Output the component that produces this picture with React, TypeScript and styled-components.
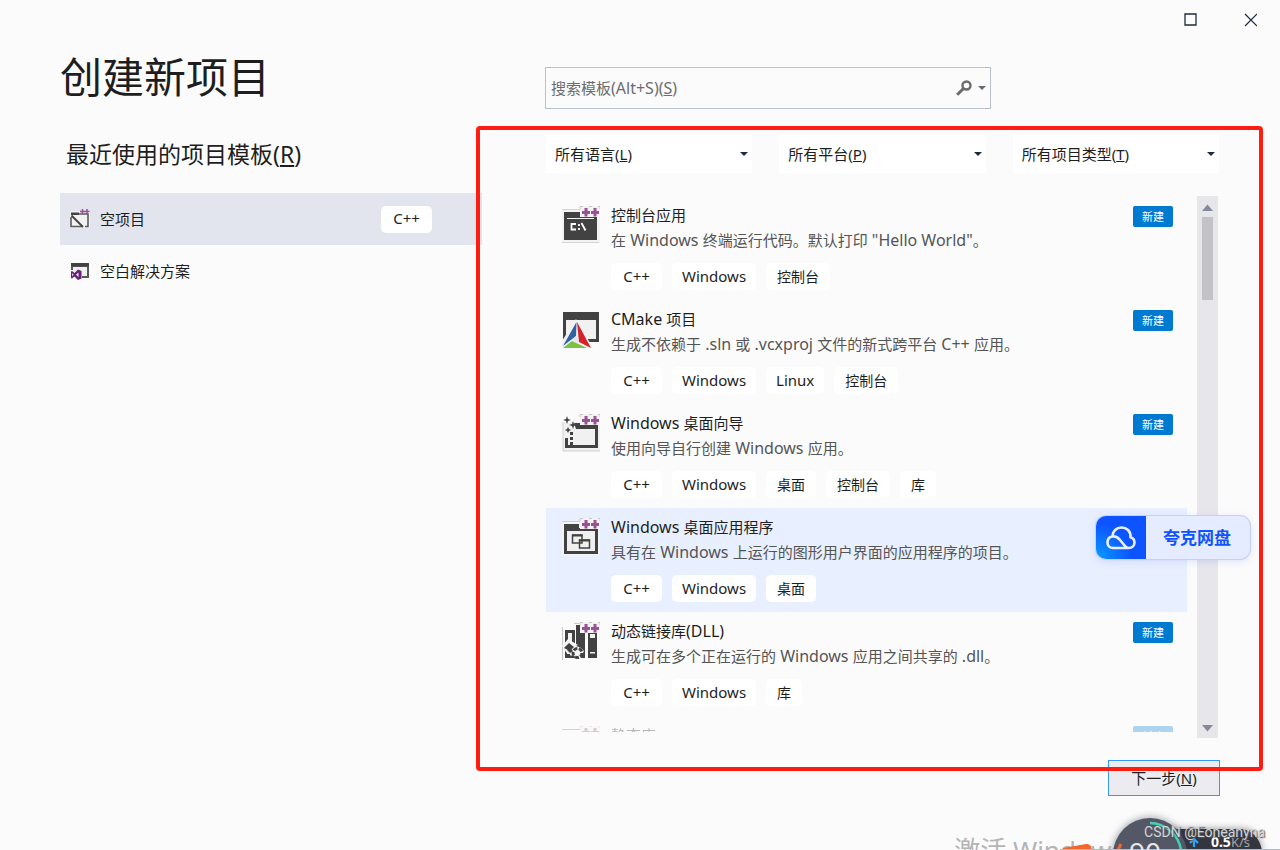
import React from "react";
import styled, { createGlobalStyle } from "styled-components";

const GlobalStyle = createGlobalStyle`
  *, *::before, *::after { box-sizing: border-box; }
  body {
    margin: 0;
    background: #fbfbfc;
    color: #1e1e1e;
    font-family: "Noto Sans", "Noto Sans CJK SC", sans-serif;
    font-size: 15px;
  }
  h1, h2, h3, p, ul { margin: 0; padding: 0; font-weight: 400; }
  ul { list-style: none; }
  button, input, select { font: inherit; color: inherit; }
`;

const Window = styled.div`
  position: relative;
  min-height: 100vh;
  overflow: hidden;
  background: #fbfbfc;
`;

const TitleBar = styled.header`
  display: flex;
  justify-content: flex-end;
  height: 40px;
`;

const WindowButton = styled.button`
  display: flex;
  align-items: center;
  justify-content: center;
  width: 60px;
  padding: 0;
  border: 0;
  background: transparent;
`;

const Content = styled.main`
  display: grid;
  grid-template-columns: minmax(0, 422fr) minmax(0, 675fr);
  column-gap: 63px;
  padding: 0 60px 54px;
`;

const RecentPane = styled.section`
  padding-top: 9px;
`;

const PageTitle = styled.h1`
  font-size: 42px;
  line-height: 56px;
`;

const SectionTitle = styled.h2`
  margin: 33px 0 23px;
  padding-left: 6px;
  font-size: 23px;
  line-height: 32px;
`;

const RecentRow = styled.li<{ $active?: boolean }>`
  display: flex;
  align-items: center;
  gap: 10px;
  height: 52px;
  padding: 0 50px 0 10px;
  background: ${(p) => (p.$active ? "#e2e5ee" : "transparent")};
`;

const RecentName = styled.span`
  flex: 1;
  padding-bottom: 2px;
`;

const Tag = styled.span<{ $latin?: boolean }>`
  display: inline-flex;
  align-items: center;
  justify-content: center;
  min-width: ${(p) => (p.$latin ? "51px" : "36px")};
  height: 27px;
  padding: ${(p) => (p.$latin ? "0 10px 2px" : "0 11px 2px")};
  border-radius: 5px;
  background: #ffffff;
  font-size: ${(p) => (p.$latin ? "15px" : "14px")};
`;

const Latin = styled.span`
  font-size: 16px;
  line-height: 1;
`;

const TemplatePane = styled.section`
  display: flex;
  flex-direction: column;
  padding-top: 27px;
`;

const SearchBox = styled.div`
  position: relative;
  display: flex;
  align-items: center;
  width: 66%;
  height: 42px;
  padding-right: 4px;
  border: 1px solid #b9c0d0;
`;

const SearchInput = styled.input`
  flex: 1;
  min-width: 0;
  height: 100%;
  padding: 0 5px;
  border: 0;
  outline: 0;
  background: transparent;
  &:not(:placeholder-shown) + label { display: none; }
`;

const SearchLabel = styled.label`
  position: absolute;
  left: 5px;
  padding-bottom: 2px;
  color: #6d6d6d;
  pointer-events: none;
`;

const SearchButton = styled.button`
  display: flex;
  align-items: center;
  gap: 6px;
  padding: 0;
  border: 0;
  background: transparent;
`;

const TemplateBrowser = styled.div`
  position: relative;
  margin-top: 26px;
`;

const Filters = styled.div`
  display: grid;
  grid-template-columns: repeat(3, minmax(0, 1fr));
  gap: 27px;
  padding: 0 1px;
`;

const FilterBox = styled.label`
  position: relative;
  display: flex;
  align-items: center;
  justify-content: space-between;
  height: 38px;
  padding: 0 4px 0 9px;
  background: #ffffff;
`;

const FilterText = styled.span`
  padding-bottom: 2px;
`;

const FilterSelect = styled.select`
  position: absolute;
  inset: 0;
  width: 100%;
  border: 0;
  opacity: 0;
`;

const ListArea = styled.div`
  display: flex;
  gap: 10px;
  height: 542px;
  margin-top: 23px;
  padding: 0 2px 0 1px;
`;

const TemplateList = styled.ul`
  flex: 1;
  min-width: 0;
  height: 536px;
  overflow: hidden;
`;

const TemplateItem = styled.li<{ $active?: boolean; $faded?: boolean }>`
  display: flex;
  gap: 11px;
  height: 104px;
  padding: 7px 14px 10px 16px;
  background: ${(p) => (p.$active ? "#e8effe" : "transparent")};
  opacity: ${(p) => (p.$faded ? 0.3 : 1)};
`;

const IconSlot = styled.div`
  width: 38px;
  padding-top: 3px;
`;

const TemplateText = styled.div`
  flex: 1;
  min-width: 0;
`;

const TemplateName = styled.h3`
  height: 25px;
  font-size: 15px;
  line-height: 25px;
  white-space: nowrap;
`;

const Description = styled.p`
  height: 25px;
  color: #555555;
  line-height: 25px;
  white-space: nowrap;
`;

const Tags = styled.div`
  display: flex;
  gap: 10px;
  margin-top: 10px;
`;

const NewBadge = styled.span`
  width: 40px;
  height: 21px;
  margin-top: 3px;
  border-radius: 2px;
  background: #0079d0;
  color: #ffffff;
  font-size: 11px;
  line-height: 22px;
  text-align: center;
`;

const ScrollTrack = styled.div`
  display: flex;
  flex-direction: column;
  align-items: center;
  width: 21px;
  padding: 8px 0 6px;
  background: #e7e6eb;
`;

const ScrollThumb = styled.div`
  width: 11px;
  height: 83px;
  margin: 6px 0 auto;
  background: #c2c2c7;
`;

const Highlight = styled.div`
  position: absolute;
  z-index: 2;
  inset: -9px -43px -33px -69px;
  border: 4px solid #ff1d11;
  border-radius: 4px;
  pointer-events: none;
`;

const DriveButton = styled.button`
  position: absolute;
  top: 381px;
  right: -30px;
  display: flex;
  width: 154px;
  height: 43px;
  padding: 0;
  overflow: hidden;
  border: 0;
  border-radius: 10px;
  background: #e6ecff;
  box-shadow: 0 0 0 1px #c3d1f8, 0 2px 8px rgba(60, 100, 230, 0.18);
`;

const DriveLogo = styled.span`
  display: flex;
  align-items: center;
  justify-content: center;
  width: 50px;
  height: 100%;
  background: radial-gradient(circle at 0 100%, #0a9cff 0, #0d53ff 55%);
`;

const DriveName = styled.span`
  flex: 1;
  padding-right: 2px;
  color: #0d53ff;
  font-size: 17px;
  font-weight: 700;
  line-height: 43px;
  text-align: center;
`;

const NextButton = styled.button`
  align-self: flex-end;
  width: 112px;
  height: 36px;
  margin-top: 22px;
  padding: 0 0 2px;
  border: 1px solid #3399ff;
  background: #ececf0;
`;

const Watermark = styled.div`
  position: absolute;
  right: 156px;
  bottom: -16px;
  color: #b4b4b4;
  font-size: 26px;
  line-height: 32px;
  white-space: nowrap;
`;

const Monitor = styled.div`
  position: absolute;
  right: 0;
  bottom: 0;
  width: 220px;
  height: 48px;
`;

const MonitorArt = styled.svg`
  display: block;
`;

const Speed = styled.div`
  position: absolute;
  right: 30px;
  bottom: 0;
  color: #a0a3aa;
  font-size: 13px;
  line-height: 16px;
  b { color: #ffffff; font-size: 14px; }
`;

const Percent = styled.div`
  position: absolute;
  left: 69px;
  bottom: -18px;
  color: #e4e6ec;
  font-size: 28px;
  line-height: 32px;
`;

const Credit = styled.div`
  position: absolute;
  right: 15px;
  bottom: 8px;
  color: #d4d4d6;
  font-family: Roboto, sans-serif;
  font-size: 14px;
  line-height: 20px;
  text-shadow: 1px 1px 1px #55585f;
  white-space: nowrap;
`;

const DARK = "#424242";
const PURPLE = "#9b4f96";

function Caret({ color = "#1b2a41" }: { color?: string }) {
  return (
    <svg width="8" height="4" viewBox="0 0 8 4" aria-hidden="true">
      <path d="M0 0H8L4 4Z" fill={color} />
    </svg>
  );
}

function PlusPlus() {
  return (
    <g>
      <path d="M18 0H38V11H18Z" fill="#f3f3f3" />
      <path d="M18 3V0.500H21M27 0.500H30M36 0.500H38V3" stroke="#c8c8c8" fill="none" />
      <path
        d="M22.5 2H25.5V5H28V8H25.5V10.5H22.5V8H20V5H22.5ZM31.5 2H34.5V5H37V8H34.5V10.5H31.5V8H29V5H31.5Z"
        fill={PURPLE}
      />
    </g>
  );
}

function ConsoleIcon() {
  return (
    <>
      <path d="M0 3H38V37H0Z" fill="#f3f3f3" />
      <path d="M0 3.500H18M0 36.500H37" stroke="#d6d6d6" />
      <path d="M2 6H35V34H2Z" fill={DARK} />
      <path d="M5 12.5H32" stroke="#f1f1f1" />
      <path
        d="M14 18H9.5V23.5H14M17 18V20M17 22V24M19.5 17L23.5 24.5"
        stroke="#fff"
        strokeWidth="1.8"
        fill="none"
      />
      <PlusPlus />
    </>
  );
}

function CMakeIcon() {
  return (
    <>
      <path d="M1 2H37V32H1Z" fill={DARK} />
      <path d="M4 10H34V29H4Z" fill="#f1f1f1" />
      <path d="M14 9L31 38H0V31Z" fill="#f1f1f1" />
      <path d="M14.500 12L1 36L14 26Z" fill="#2f62a3" />
      <path d="M15 12L29 38L17 32Z" fill="#d3222a" />
      <path d="M1 38L10 31L25 38Z" fill="#7cc242" />
      <path d="M14 26L17 33L10 30Z" fill="#e4e6ea" />
    </>
  );
}

function WizardIcon() {
  return (
    <>
      <path d="M1 8H38V37H1Z" fill="#f1f1f1" />
      <path d="M1 8V37H38" stroke="#cfcfcf" fill="none" />
      <path d="M12 9H19V11H36V34H3V24H6V31H33V15H14Z" fill={DARK} />
      <path
        d="M5 2L6 5L9 6L6 7L5 10L4 7L1 6L4 5ZM11 7L12 10L15 11L12 12L11 15L10 12L7 11L10 10ZM6 13L7 15L9 16L7 17L6 19L5 17L3 16L5 15Z"
        fill={DARK}
      />
      <path d="M9.500 18V31" stroke={DARK} strokeWidth="3" strokeDasharray="3 2" />
      <PlusPlus />
    </>
  );
}

function DesktopIcon() {
  return (
    <>
      <path d="M0 3H38V38H0Z" fill="#f4f4f4" />
      <path d="M0 3.500H18" stroke="#d0d0d0" />
      <path d="M2 6H17V10H36V36H2Z" fill={DARK} />
      <path d="M5 13H33V33H5Z" fill="#f0f0f0" />
      <path d="M10.500 17H20V25H10.500ZM17.500 22H27.500V30H17.500Z" fill="#f0f0f0" stroke={DARK} strokeWidth="1.500" />
      <path d="M10 17.500H20.500M17 22.500H28" stroke={DARK} strokeWidth="2" />
      <PlusPlus />
    </>
  );
}

function LibraryIcon() {
  return (
    <>
      <path d="M0.500 5V38M12 1.500H17" stroke="#c8c8c8" />
      <path d="M3 8H13V36H3Z" fill={DARK} />
      <path d="M6 11H10V20H6Z" fill="#f1f1f1" />
      <path d="M14 3H18V11H23V36H14Z" fill={DARK} />
      <path d="M26 11H35V36H26Z" fill={DARK} />
      <path d="M28 12H33V16H28ZM28 30H33V31.500H28Z" fill="#f1f1f1" />
      <path d="M0 24L6 17L16 23L22 29L18 37L12 34L6 33Z" fill="#f6f6f6" />
      <path d="M2 26L7 21L12 25L8 29Z" fill={DARK} />
      <path d="M5 28L8 26L11 29L8 31Z" fill={DARK} />
      <circle cx="15.500" cy="31" r="4.500" fill="none" stroke={DARK} strokeWidth="3" strokeDasharray="4 1.500" />
      <path d="M4 32H8V36H4ZM14 24L18 22L20 26Z" fill={DARK} />
      <PlusPlus />
    </>
  );
}

function StaticIcon() {
  return (
    <>
      <path d="M0 3.500H18" stroke="#777" />
      <path d="M3 8H35V36H3Z" fill={DARK} />
      <PlusPlus />
    </>
  );
}

interface Template {
  name: string;
  description: string;
  tags: string[];
  icon: () => React.JSX.Element;
  isNew?: boolean;
  active?: boolean;
  faded?: boolean;
}

const templates: Template[] = [
  {
    name: "控制台应用",
    description: '在 Windows 终端运行代码。默认打印 "Hello World"。',
    tags: ["C++", "Windows", "控制台"],
    icon: ConsoleIcon,
    isNew: true,
  },
  {
    name: "CMake 项目",
    description: "生成不依赖于 .sln 或 .vcxproj 文件的新式跨平台 C++ 应用。",
    tags: ["C++", "Windows", "Linux", "控制台"],
    icon: CMakeIcon,
    isNew: true,
  },
  {
    name: "Windows 桌面向导",
    description: "使用向导自行创建 Windows 应用。",
    tags: ["C++", "Windows", "桌面", "控制台", "库"],
    icon: WizardIcon,
    isNew: true,
  },
  {
    name: "Windows 桌面应用程序",
    description: "具有在 Windows 上运行的图形用户界面的应用程序的项目。",
    tags: ["C++", "Windows", "桌面"],
    icon: DesktopIcon,
    active: true,
  },
  {
    name: "动态链接库(DLL)",
    description: "生成可在多个正在运行的 Windows 应用之间共享的 .dll。",
    tags: ["C++", "Windows", "库"],
    icon: LibraryIcon,
    isNew: true,
  },
  {
    name: "静态库",
    description: "",
    tags: [],
    icon: StaticIcon,
    isNew: true,
    faded: true,
  },
];

const filters = [
  { text: "所有语言", key: "L" },
  { text: "所有平台", key: "P" },
  { text: "所有项目类型", key: "T" },
];

function TagLabel({ text }: { text: string }) {
  return <Tag $latin={/^[\x20-\x7e]+$/.test(text)}>{text}</Tag>;
}

/* Sets the Latin runs of a mixed line one size up, so they balance the Chinese. */
function MixedText({ text }: { text: string }) {
  return (
    <>
      {text.split(/([\x20-\x7e]+)/).map((run, i) => (i % 2 ? <Latin key={i}>{run}</Latin> : run))}
    </>
  );
}

export default function App() {
  return (
    <Window>
      <GlobalStyle />
      <TitleBar>
        <WindowButton aria-label="最大化">
          <svg width="14" height="14" viewBox="0 0 14 14">
            <path d="M2 1H13V12H2Z" fill="none" stroke="#1b2a41" strokeWidth="1.3" />
          </svg>
        </WindowButton>
        <WindowButton aria-label="关闭">
          <svg width="14" height="14" viewBox="0 0 14 14">
            <path d="M2 1L14 13M14 1L2 13" stroke="#1b2a41" strokeWidth="1.200" />
          </svg>
        </WindowButton>
      </TitleBar>

      <Content>
        <RecentPane>
          <PageTitle>创建新项目</PageTitle>
          <SectionTitle>
            最近使用的项目模板(<u>R</u>)
          </SectionTitle>
          <ul>
            <RecentRow $active>
              <svg width="20" height="20" viewBox="0 0 20 20" aria-hidden="true">
                <path d="M0 2H20V19H0Z" fill="#f2f2f2" />
                <path d="M1 3.500H9V6H1Z" fill={DARK} />
                <path d="M1 8V17.500H12M15 17.500H18V5H9" stroke="#5a5a5a" strokeWidth="1.600" fill="none" />
                <path d="M1.500 6.500L13 18" stroke={DARK} strokeWidth="1.800" />
                <path d="M12.500 0V5M10 2.500H15M17 0V5M14.800 2.500H19.500" stroke={PURPLE} strokeWidth="1.500" />
              </svg>
              <RecentName>空项目</RecentName>
              <TagLabel text="C++" />
            </RecentRow>
            <RecentRow>
              <svg width="20" height="20" viewBox="0 0 20 20" aria-hidden="true">
                <path d="M1 2H19V17H12V15H17V6H3V9H1Z" fill="#5a5a5a" />
                <path d="M1 2H19V5.500H1Z" fill={DARK} />
                <path d="M3 6H17V15H3Z" fill="#f1f1f1" />
                <path
                  d="M8 8.500L11.500 10V17.500L8 19L4.500 15.500L2 17.500L1 17V10.500L2 10L4.500 12ZM8.500 11.500L6 13.800L8.500 16ZM2.200 12.300V15.300L3.700 13.800Z"
                  fill="#68217a"
                  fillRule="evenodd"
                />
              </svg>
              <RecentName>空白解决方案</RecentName>
            </RecentRow>
          </ul>
        </RecentPane>

        <TemplatePane>
          <SearchBox>
            <SearchInput id="template-search" type="text" placeholder=" " />
            <SearchLabel htmlFor="template-search">
              搜索模板
              <Latin>
                (Alt+S)(<u>S</u>)
              </Latin>
            </SearchLabel>
            <SearchButton aria-label="搜索">
              <svg width="16" height="16" viewBox="0 0 16 16">
                <circle cx="10.500" cy="5.500" r="4" fill="none" stroke="#6a6a6a" strokeWidth="2.400" />
                <path d="M7.500 8.500L1.200 14.800" stroke="#6a6a6a" strokeWidth="3" />
              </svg>
              <Caret color="#6a6a6a" />
            </SearchButton>
          </SearchBox>

          <TemplateBrowser>
            <Filters>
              {filters.map((f) => (
                <FilterBox key={f.key}>
                  <FilterText>
                    {f.text}(<u>{f.key}</u>)
                  </FilterText>
                  <Caret />
                  <FilterSelect aria-label={f.text}>
                    <option>{f.text}</option>
                  </FilterSelect>
                </FilterBox>
              ))}
            </Filters>

            <ListArea>
              <TemplateList>
                {templates.map((t) => (
                  <TemplateItem key={t.name} $active={t.active} $faded={t.faded}>
                    <IconSlot>
                      <svg width="38" height="38" viewBox="0 0 38 38" aria-hidden="true">
                        <t.icon />
                      </svg>
                    </IconSlot>
                    <TemplateText>
                      <TemplateName>
                        <MixedText text={t.name} />
                      </TemplateName>
                      <Description>
                        <MixedText text={t.description} />
                      </Description>
                      <Tags>
                        {t.tags.map((tag) => (
                          <TagLabel key={tag} text={tag} />
                        ))}
                      </Tags>
                    </TemplateText>
                    {t.isNew && <NewBadge>新建</NewBadge>}
                  </TemplateItem>
                ))}
              </TemplateList>
              <ScrollTrack>
                <svg width="11" height="7" viewBox="0 0 11 7" aria-hidden="true">
                  <path d="M0 7H11L5.500 0.500Z" fill="#868999" />
                </svg>
                <ScrollThumb />
                <svg width="11" height="7" viewBox="0 0 11 7" aria-hidden="true">
                  <path d="M0 0H11L5.500 6.500Z" fill="#868999" />
                </svg>
              </ScrollTrack>
            </ListArea>

            <DriveButton>
              <DriveLogo>
                <svg width="30" height="24" viewBox="0 0 30 24" aria-hidden="true">
                  <path
                    d="M7 22H22.500C26.500 22 28.500 19.500 28.500 16.500C28.500 14 27 12 24.500 11.300C25 5 20.500 1.500 15.500 1.500C10.500 1.500 6.500 5 6.300 10.500C3.500 11 1.500 13.300 1.500 16.500C1.500 19.500 3.500 22 7 22ZM6.300 10.500C9.500 10 12 11.500 14 14L19 20C20 21.300 21 22 22.500 22"
                    fill="none"
                    stroke="#e9f0ff"
                    strokeWidth="2.600"
                  />
                </svg>
              </DriveLogo>
              <DriveName>夸克网盘</DriveName>
            </DriveButton>
            <Highlight />
          </TemplateBrowser>

          <NextButton>
            下一步(<u>N</u>)
          </NextButton>
        </TemplatePane>
      </Content>

      <Watermark>激活 Windows</Watermark>
      <Monitor>
        <MonitorArt width="220" height="48" viewBox="0 0 220 48" aria-hidden="true">
          <defs>
            <filter id="monitor-glow" x="-20%" y="-40%" width="140%" height="180%">
              <feGaussianBlur stdDeviation="3" />
            </filter>
          </defs>
          <path d="M3 46L26 42Q31 41 32 48H3Z" fill="#f4662c" />
          <circle cx="90" cy="53" r="39" fill="#777a84" opacity="0.500" filter="url(#monitor-glow)" />
          <path d="M110 26H184Q200 29 203 48H110Z" fill="#555" opacity="0.500" filter="url(#monitor-glow)" />
          <path d="M110 27H182Q198 30 202 48H110Z" fill="#34363f" />
          <circle cx="90" cy="53" r="37" fill="#545765" />
          <path d="M90 21A32 32 0 0 1 121 48" fill="none" stroke="#43d3b4" strokeWidth="2.500" />
          <path d="M61 42L58 48" stroke="#f4662c" strokeWidth="3" />
          <path d="M134 45V38M130 41L134 37L138 41" fill="none" stroke="#35a6f2" strokeWidth="2.200" />
          <path d="M0 47.500H220" stroke="#a9bccb" />
        </MonitorArt>
        <Percent>90</Percent>
        <Speed>
          <b>0.5</b>K/s
        </Speed>
      </Monitor>
      <Credit>CSDN @Eoneanyna</Credit>
    </Window>
  );
}
